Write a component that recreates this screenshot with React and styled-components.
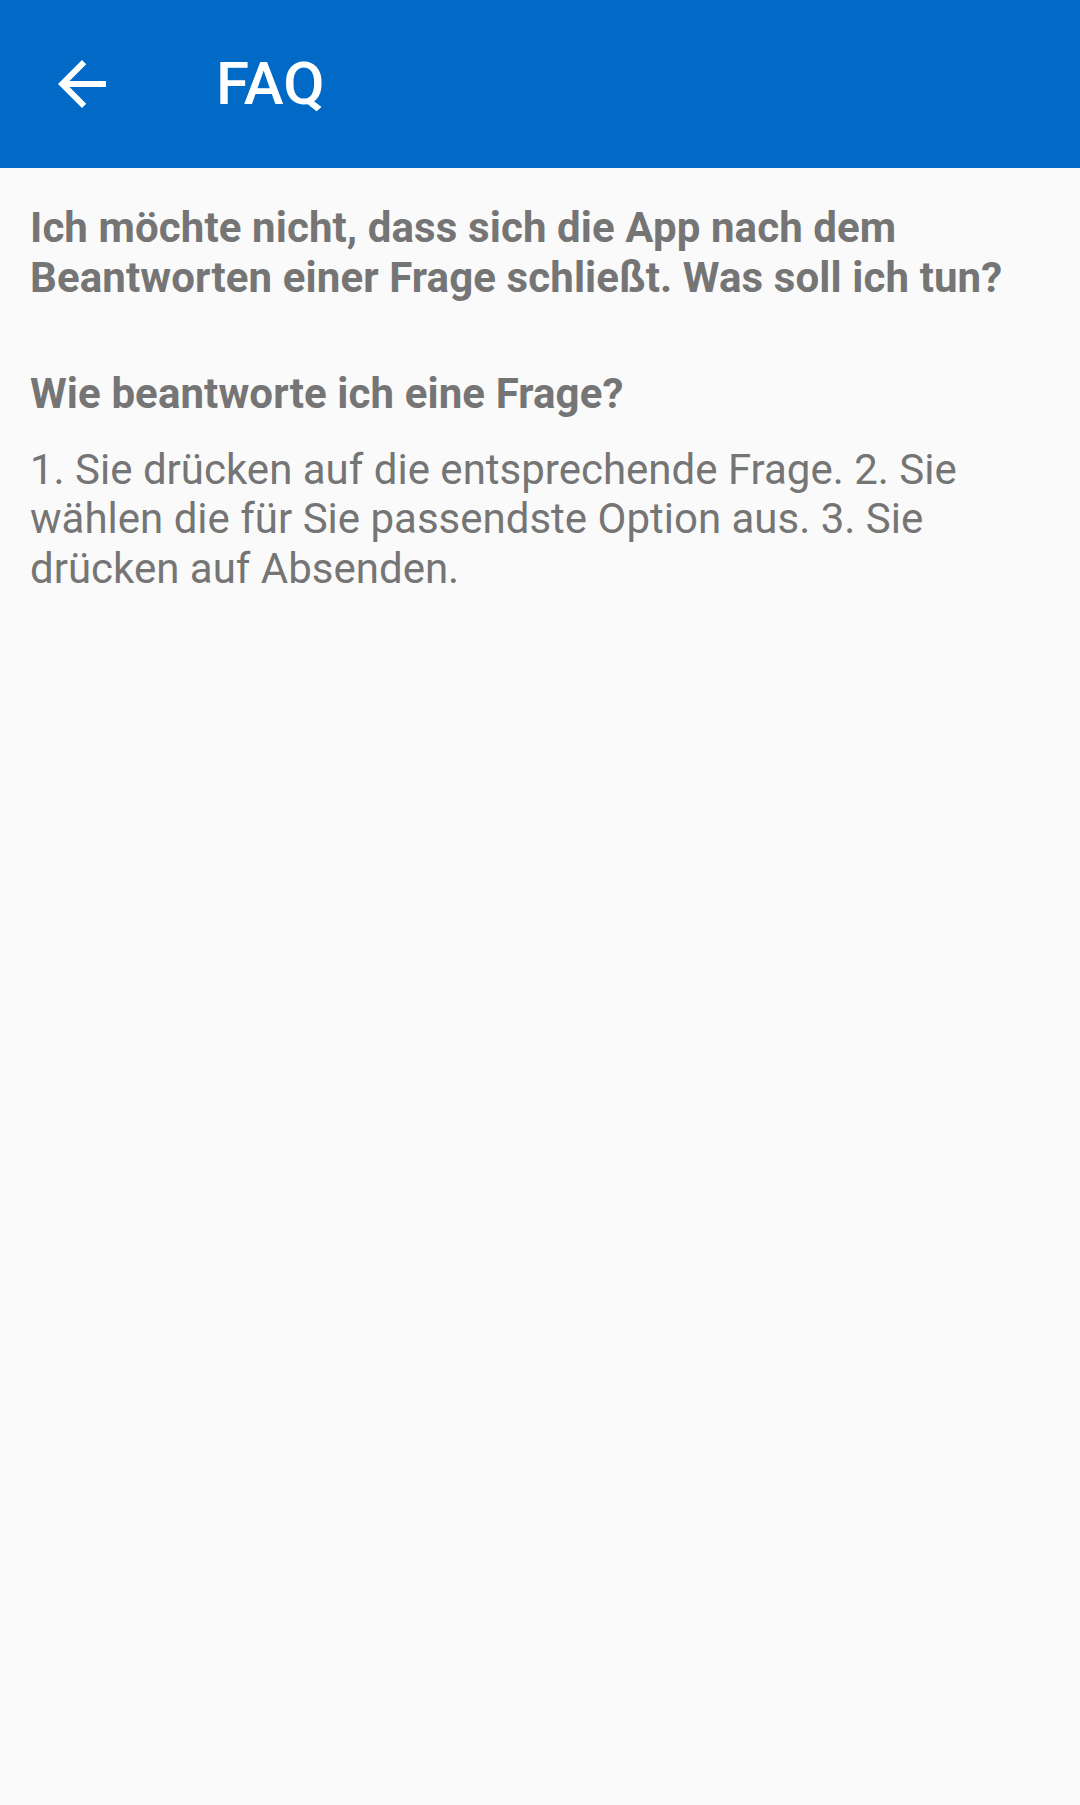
import React from "react";
import styled, { createGlobalStyle } from "styled-components";

const Global = createGlobalStyle`
  html, body { margin: 0; padding: 0; background: #fafafa; }
  body { font-family: Roboto, "Noto Sans", sans-serif; }
  #root { min-height: 1805px; background: #fafafa; }
`;

const Screen = styled.div`
  width: 1080px;
  min-height: 1805px;
  background: #fafafa;
  display: flex;
  flex-direction: column;
`;

const Toolbar = styled.header`
  height: 168px;
  background: #006ac6;
  display: flex;
  align-items: center;
  flex-shrink: 0;
`;

const NavButton = styled.button`
  width: 166px;
  height: 168px;
  padding: 0 0 0 46px;
  border: 0;
  background: transparent;
  display: flex;
  align-items: center;
  justify-content: flex-start;
  color: #fff;
  svg { display: block; }
`;

const Title = styled.h1`
  margin: 0 0 0 50px;
  font-family: Roboto, sans-serif;
  font-weight: 500;
  font-size: 60px;
  color: #ffffff;
  line-height: 1;
`;

const Content = styled.main`
  padding: 35px 30px 0 30px;
  display: flex;
  flex-direction: column;
`;

const Question = styled.h2`
  margin: 0 0 ${(p) => p.$gap || 0}px 0;
  font-family: Roboto, sans-serif;
  font-weight: 700;
  font-size: 42px;
  letter-spacing: 0.1px;
  line-height: 49.5px;
  color: #757575;
`;

const Answer = styled.p`
  margin: 0;
  font-family: Roboto, sans-serif;
  font-weight: 400;
  font-size: 42px;
  line-height: 49.5px;
  color: #757575;
`;

const BackArrow = () => (
  <svg width="72" height="72" viewBox="0 0 24 24" fill="#ffffff">
    <path d="M20 11H7.83l5.59-5.59L12 4l-8 8 8 8 1.41-1.41L7.83 13H20v-2z" />
  </svg>
);

export default function App() {
  return (
    <>
      <Global />
      <Screen>
        <Toolbar>
          <NavButton aria-label="Zurück">
            <BackArrow />
          </NavButton>
          <Title>FAQ</Title>
        </Toolbar>
        <Content>
          <Question $gap={67}>
            Ich möchte nicht, dass sich die App nach dem Beantworten einer Frage schließt. Was soll ich tun?
          </Question>
          <Question $gap={26}>Wie beantworte ich eine Frage?</Question>
          <Answer>
            1. Sie drücken auf die entsprechende Frage. 2. Sie wählen die für Sie passendste Option aus. 3. Sie drücken auf Absenden.
          </Answer>
        </Content>
      </Screen>
    </>
  );
}
